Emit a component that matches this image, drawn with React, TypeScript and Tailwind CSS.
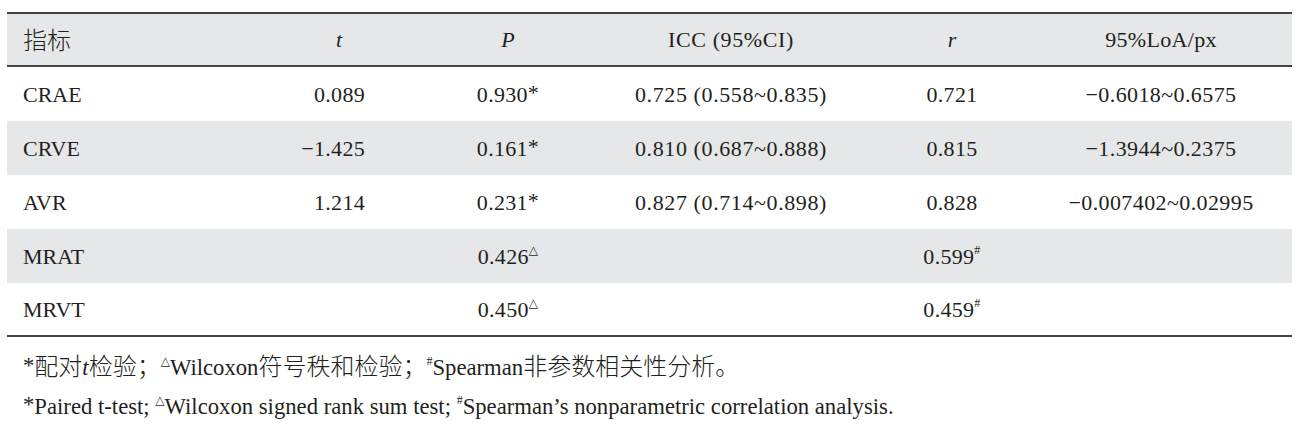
import React from "react";

const cols = "grid grid-cols-[243px_178px_160px_286px_156px_262px] h-[54px] items-center";
const SERIF = '"Liberation Serif", "Times New Roman", "DejaVu Serif", serif';
const CJK = '"Noto Sans CJK SC", "Noto Sans CJK JP", sans-serif';

const Sup = ({ children }: { children: React.ReactNode }) => (
  <span className="text-[12px] relative top-[-10px] leading-none">{children}</span>
);
const Star = () => <span className="relative top-[-2px]">*</span>;
const Cjk = ({ children }: { children: React.ReactNode }) => (
  <span className="text-[24px]" style={{ fontFamily: CJK, fontWeight: 300 }}>{children}</span>
);

type Row = {
  name: string;
  t?: string;
  p: React.ReactNode;
  icc?: string;
  r: React.ReactNode;
  loa?: string;
  gray: boolean;
};

const rows: Row[] = [
  { name: "CRAE", t: "0.089", p: <>0.930<Star /></>, icc: "0.725 (0.558~0.835)", r: "0.721", loa: "−0.6018~0.6575", gray: false },
  { name: "CRVE", t: "−1.425", p: <>0.161<Star /></>, icc: "0.810 (0.687~0.888)", r: "0.815", loa: "−1.3944~0.2375", gray: true },
  { name: "AVR", t: "1.214", p: <>0.231<Star /></>, icc: "0.827 (0.714~0.898)", r: "0.828", loa: "−0.007402~0.02995", gray: false },
  { name: "MRAT", p: <>0.426<Sup>△</Sup></>, r: <>0.599<Sup>#</Sup></>, gray: true },
  { name: "MRVT", p: <>0.450<Sup>△</Sup></>, r: <>0.459<Sup>#</Sup></>, gray: false },
];

export default function App() {
  return (
    <div
      className="w-[1311px] h-[433px] bg-white text-[#231f20] pt-[12px] pl-[7px]"
      style={{ fontFamily: SERIF }}
    >
      <div className="w-[1285px] text-[22px]">
        <div className={`${cols} bg-[#e6e7e8] border-t-2 border-b-2 border-[#444444] h-[55px]`}>
          <div className="pl-[16px]"><Cjk>指标</Cjk></div>
          <div className="text-center italic">t</div>
          <div className="text-center italic">P</div>
          <div className="text-center tracking-[0.6px]">ICC (95%CI)</div>
          <div className="text-center italic">r</div>
          <div className="text-center tracking-[0.3px]">95%LoA/px</div>
        </div>
        {rows.map((row, i) => (
          <div
            key={row.name}
            className={`${cols} ${row.gray ? "bg-[#e6e7e8]" : "bg-white"} ${i === rows.length - 1 ? "border-b-2 border-[#444444]" : ""}`}
          >
            <div className="pl-[16px]">{row.name}</div>
            <div className="text-right pr-[63px] tracking-[0.3px]">{row.t ?? ""}</div>
            <div className="text-center tracking-[0.3px]">{row.p}</div>
            <div className="text-center tracking-[0.6px]">{row.icc ?? ""}</div>
            <div className="text-center tracking-[0.3px]">{row.r}</div>
            <div className="text-center tracking-[0.4px]">{row.loa ?? ""}</div>
          </div>
        ))}
        <div className="pl-[16px] mt-[8px] text-[22.7px] leading-[39px]">
          <div className="whitespace-nowrap">
            <Star />
            <Cjk>配对</Cjk>
            <span className="italic">t</span>
            <Cjk>检验；</Cjk>
            <Sup>△</Sup>Wilcoxon
            <Cjk>符号秩和检验；</Cjk>
            <Sup>#</Sup>Spearman
            <Cjk>非参数相关性分析。</Cjk>
          </div>
          <div className="whitespace-nowrap">
            <Star />Paired t-test; <Sup>△</Sup>Wilcoxon signed rank sum test; <Sup>#</Sup>Spearman’s nonparametric correlation analysis.
          </div>
        </div>
      </div>
    </div>
  );
}
